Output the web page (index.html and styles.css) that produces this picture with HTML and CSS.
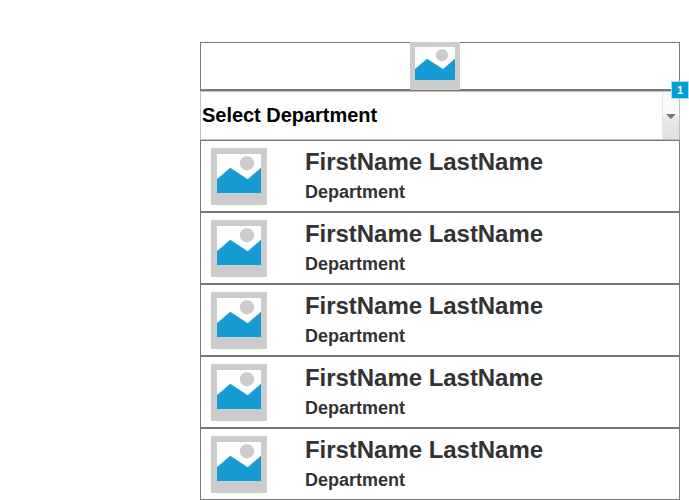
FILE: index.html
```html
<!DOCTYPE html>
<html lang="en">
<head>
<meta charset="utf-8">
<title>Directory</title>
<link rel="stylesheet" href="styles.css">
</head>
<body>
<svg class="defs" aria-hidden="true">
  <symbol id="photo" viewBox="0 0 56 57" preserveAspectRatio="none">
    <path fill="#ccc" d="M0 0h56v57H0z"/>
    <path fill="#fff" d="M6 6h44v39H6z"/>
    <circle cx="36" cy="15.3" r="7.1" fill="#ccc"/>
    <path fill="#169bd5" d="M6 31.2 19.3 19.7 36.7 31.2 50 19.7V45H6z"/>
  </symbol>
</svg>
<main class="directory">
  <header class="header">
    <svg class="logo" viewBox="0 0 50 48">
      <path fill="#ccc" d="M0 0h50v48H0z"/>
      <path fill="#fff" d="M5 5h40v33H5z"/>
      <circle cx="32" cy="13.2" r="6.1" fill="#ccc"/>
      <path fill="#169bd5" d="M5 27 17 16.7 33 27 45 16.7V38H5z"/>
    </svg>
  </header>
  <div class="select">
    <span class="select-label">Select Department</span>
    <span class="select-button"><svg class="arrow" viewBox="0 0 10 5"><path fill="#777" d="M0 0h10L5 5z"/></svg></span>
    <span class="badge">1</span>
  </div>
  <article class="person"><svg class="photo"><use href="#photo"/></svg><div class="info"><h2 class="name">FirstName LastName</h2><p class="department">Department</p></div></article>
  <article class="person"><svg class="photo"><use href="#photo"/></svg><div class="info"><h2 class="name">FirstName LastName</h2><p class="department">Department</p></div></article>
  <article class="person"><svg class="photo"><use href="#photo"/></svg><div class="info"><h2 class="name">FirstName LastName</h2><p class="department">Department</p></div></article>
  <article class="person"><svg class="photo"><use href="#photo"/></svg><div class="info"><h2 class="name">FirstName LastName</h2><p class="department">Department</p></div></article>
  <article class="person"><svg class="photo"><use href="#photo"/></svg><div class="info"><h2 class="name">FirstName LastName</h2><p class="department">Department</p></div></article>
</main>
</body>
</html>
```
FILE: styles.css
```css
* {
  box-sizing: border-box;
}

body {
  margin: 0;
  background: #fff;
  font-family: "Liberation Sans", Arial, sans-serif;
  font-weight: bold;
}

.defs {
  display: block;
  width: 0;
  height: 0;
}

.directory {
  width: 480px;
  margin: 42px 0 0 200px;
}

.header {
  display: flex;
  justify-content: center;
  height: 49px;
  padding-right: 10px;
  border: 1px solid #797979;
  border-bottom-width: 2px;
}

.logo {
  flex: none;
  width: 50px;
  height: 48px;
  margin-top: -1px;
}

.select {
  position: relative;
  display: flex;
  align-items: stretch;
  justify-content: space-between;
  height: 49px;
  border: 1px solid #c0c0c0;
  color: #000;
}

.select-label {
  padding-left: 1px;
  font-size: 20px;
  line-height: 47px;
  letter-spacing: -0.03px;
}

.select-button {
  display: flex;
  align-items: center;
  justify-content: center;
  width: 17px;
  border-left: 1px solid #e6e6e6;
  background: linear-gradient(#fafafa 50%, #ebebeb 50%, #e0e0e0);
}

.arrow {
  width: 10px;
  height: 5px;
  margin-top: 2px;
}

.badge {
  position: absolute;
  top: -11px;
  right: -10px;
  width: 18px;
  height: 18px;
  border: 1px solid #a5dbf2;
  background: #009dd9;
  color: #fff;
  font-size: 11px;
  line-height: 17px;
  text-align: center;
}

.person {
  display: flex;
  height: 72px;
  padding: 7px 10px;
  border: 1px solid #797979;
  color: #333;
}

.photo {
  flex: none;
  width: 56px;
  height: 57px;
}

.info {
  margin-left: 38px;
}

.name {
  margin: 0;
  font-size: 24px;
  line-height: 28px;
  letter-spacing: -0.04px;
}

.department {
  margin: 6px 0 0;
  font-size: 18px;
  line-height: 21px;
}
```
